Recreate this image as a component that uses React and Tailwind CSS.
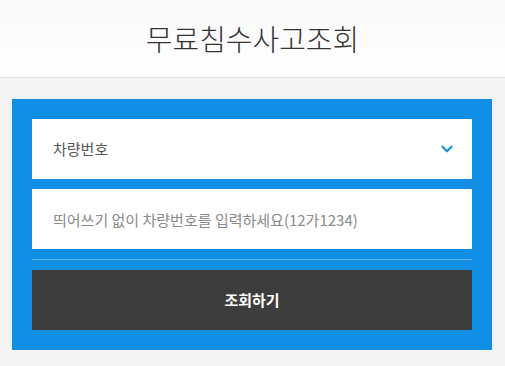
import { ChevronDown } from "lucide-react";

export default function App()
{
    return (
        <div className="w-[505px] h-[366px] bg-[#f4f4f4] font-['Noto_Sans_CJK_KR',sans-serif]">
            <header className="h-[78px] bg-gradient-to-b from-[#f9f9f9] to-white border-b border-[#dddddd] flex items-center justify-center">
                <h1 className="text-[29px] text-[#333333] font-light leading-none">무료침수사고조회</h1>
            </header>

            <div className="ml-3 w-[480px] mt-[21px] bg-[#118fe6] p-5">
                <div className="h-[60px] bg-white flex items-center justify-between pl-[21px] pr-[16px]">
                    <span className="text-[15px] text-[#555555]">차량번호</span>
                    <ChevronDown className="w-[18px] h-[18px] text-[#1a8fdc]" strokeWidth={3} />
                </div>

                <input
                    className="mt-[10px] h-[60px] w-full bg-white pl-[21px] text-[15px] text-[#555555] placeholder:text-[#8a8a8a] outline-none"
                    placeholder="띄어쓰기 없이 차량번호를 입력하세요(12가1234)"
                />

                <div className="mt-[10px] h-px bg-[#5fb3f0]" />

                <button className="mt-[10px] h-[60px] w-full bg-[#3d3d3d] text-white text-[15px] font-bold">
                    조회하기
                </button>
            </div>
        </div>
    );
}
